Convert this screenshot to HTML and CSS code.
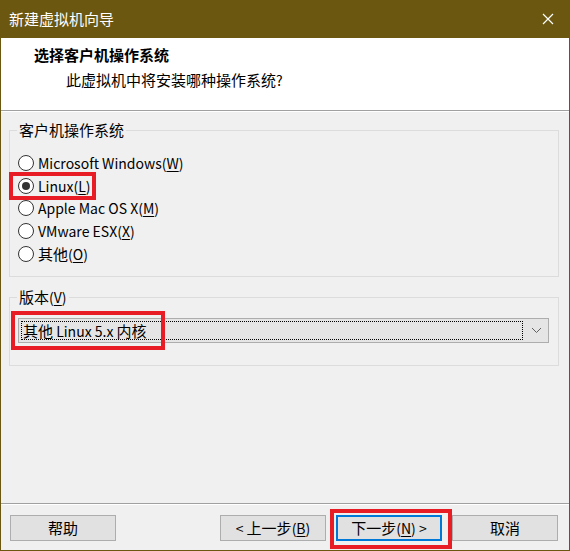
FILE: index.html
```html
<!DOCTYPE html>
<html lang="zh-CN">
<head>
<meta charset="utf-8">
<title>新建虚拟机向导</title>
<link rel="stylesheet" href="styles.css">
</head>
<body>
<div class="window">
  <div class="titlebar">
    <span class="title-text">新建虚拟机向导</span>
    <svg class="close" width="12" height="12" viewBox="0 0 12 12"><path d="M1 1 L11 11 M11 1 L1 11" stroke="#fff" stroke-width="1.2" fill="none"/></svg>
  </div>
  <div class="content">
    <div class="header">
      <div class="h-title">选择客户机操作系统</div>
      <div class="h-sub">此虚拟机中将安装哪种操作系统<span class="en">?</span></div>
    </div>
    <div class="main">
      <div class="group g1">
        <div class="legend">客户机操作系统</div>
        <div class="radios">
          <div class="radio-row"><span class="radio"></span><span class="lbl en">Microsoft Windows(<u>W</u>)</span></div>
          <div class="radio-row mark"><span class="radio checked"></span><span class="lbl en">Linux(<u>L</u>)</span></div>
          <div class="radio-row"><span class="radio"></span><span class="lbl en">Apple Mac OS X(<u>M</u>)</span></div>
          <div class="radio-row"><span class="radio"></span><span class="lbl en">VMware ESX(<u>X</u>)</span></div>
          <div class="radio-row"><span class="radio"></span><span class="lbl">其他<span class="en">(<u>O</u>)</span></span></div>
        </div>
      </div>
      <div class="group g2">
        <div class="legend">版本<span class="en">(<u>V</u>)</span></div>
        <div class="combo mark">
          <div class="combo-value">其他<span class="en"> Linux 5.x </span>内核</div>
          <svg class="chev" width="11" height="7" viewBox="0 0 11 7"><path d="M1 1 L5.5 5.5 L10 1" stroke="#606060" stroke-width="1" fill="none"/></svg>
        </div>
      </div>
    </div>
    <div class="footer">
      <button class="btn">帮助</button>
      <div class="spacer"></div>
      <button class="btn"><span class="en">&lt; </span>上一步<span class="en">(<u>B</u>)</span></button>
      <button class="btn primary mark">下一步<span class="en">(<u>N</u>) &gt;</span></button>
      <button class="btn">取消</button>
    </div>
  </div>
</div>
</body>
</html>
```
FILE: styles.css
```css
html, body {
  margin: 0;
  padding: 0;
  background: #f0f0f0;
}
body {
  font-family: "Noto Sans CJK SC", "Noto Sans", sans-serif;
  font-size: 15px;
  color: #000;
}
.en {
  font-size: 14px;
}
.window {
  width: 570px;
  height: 551px;
  box-sizing: border-box;
  background: #6b5710;
  padding: 0 1px 1px 1px;
  display: flex;
  flex-direction: column;
}
.titlebar {
  height: 38px;
  flex: none;
  display: flex;
  align-items: center;
  padding: 0 15px 0 8px;
  color: #fff;
}
.title-text {
  flex: 1;
  font-size: 15px;
  line-height: 20px;
}
.close {
  display: block;
}
.content {
  flex: 1;
  background: #f0f0f0;
  display: flex;
  flex-direction: column;
}
.header {
  height: 73px;
  flex: none;
  box-sizing: border-box;
  background: #fff;
  border-bottom: 1px solid #a0a0a0;
  box-shadow: 0 1px 0 #fff;
  padding: 7px 0 0 33px;
}
.h-title {
  font-weight: bold;
  line-height: 20px;
}
.h-sub {
  line-height: 20px;
  margin: 5px 0 0 32px;
}
.main {
  flex: 1;
  padding: 0 10px 0 8px;
}
.group {
  border: 1px solid #dcdcdc;
  box-sizing: border-box;
}
.g1 {
  margin-top: 19px;
  height: 147px;
}
.g2 {
  margin-top: 20px;
  height: 69px;
}
.legend {
  width: fit-content;
  margin: -11px 0 0 7px;
  padding: 0 2px;
  line-height: 20px;
  background: #f0f0f0;
}
.radios {
  margin-top: 12px;
  padding-left: 8px;
}
.radio-row {
  height: 22.6px;
  display: flex;
  align-items: center;
  gap: 4px;
  position: relative;
  width: fit-content;
}
.radio {
  width: 16px;
  height: 16px;
  box-sizing: border-box;
  border: 1px solid #333;
  border-radius: 50%;
  background: #fff;
  display: flex;
  align-items: center;
  justify-content: center;
}
.radio.checked::before {
  content: "";
  width: 8px;
  height: 8px;
  border-radius: 50%;
  background: #333;
}
.lbl {
  line-height: 20px;
}
u {
  text-decoration-thickness: 1px;
  text-underline-offset: 2px;
}
.combo {
  margin: 11px 9px 0 8px;
  height: 25px;
  box-sizing: border-box;
  border: 1px solid #adadad;
  background: #e5e5e5;
  display: flex;
  align-items: center;
  padding: 0 6px 0 2px;
  position: relative;
}
.combo-value {
  flex: 1;
  height: 19px;
  box-sizing: border-box;
  border: 1px dotted #000;
  line-height: 17px;
  padding-left: 1px;
  margin-right: 8px;
}
.chev {
  display: block;
}
.footer {
  height: 47px;
  flex: none;
  box-sizing: border-box;
  border-top: 1px solid #a0a0a0;
  box-shadow: inset 0 1px 0 #fff;
  display: flex;
  align-items: flex-start;
  gap: 10px;
  padding: 11px 11px 0 9px;
}
.spacer {
  flex: 1;
}
.btn {
  width: 106px;
  height: 26px;
  box-sizing: border-box;
  border: 1px solid #adadad;
  background: #e1e1e1;
  font-family: inherit;
  font-size: 15px;
  line-height: 20px;
  color: #000;
  padding: 0;
  position: relative;
}
.btn.primary {
  border: 2px solid #0078d7;
}
.mark::after {
  content: "";
  position: absolute;
  border: 4px solid #e81c24;
  box-sizing: border-box;
  pointer-events: none;
}
.radio-row.mark::after {
  left: -9px;
  top: -3px;
  width: 87px;
  height: 28px;
}
.combo.mark::after {
  left: -8px;
  top: -8px;
  width: 154px;
  height: 39px;
}
.btn.mark::after {
  left: -8px;
  top: -8px;
  width: 122px;
  height: 40px;
}
```
